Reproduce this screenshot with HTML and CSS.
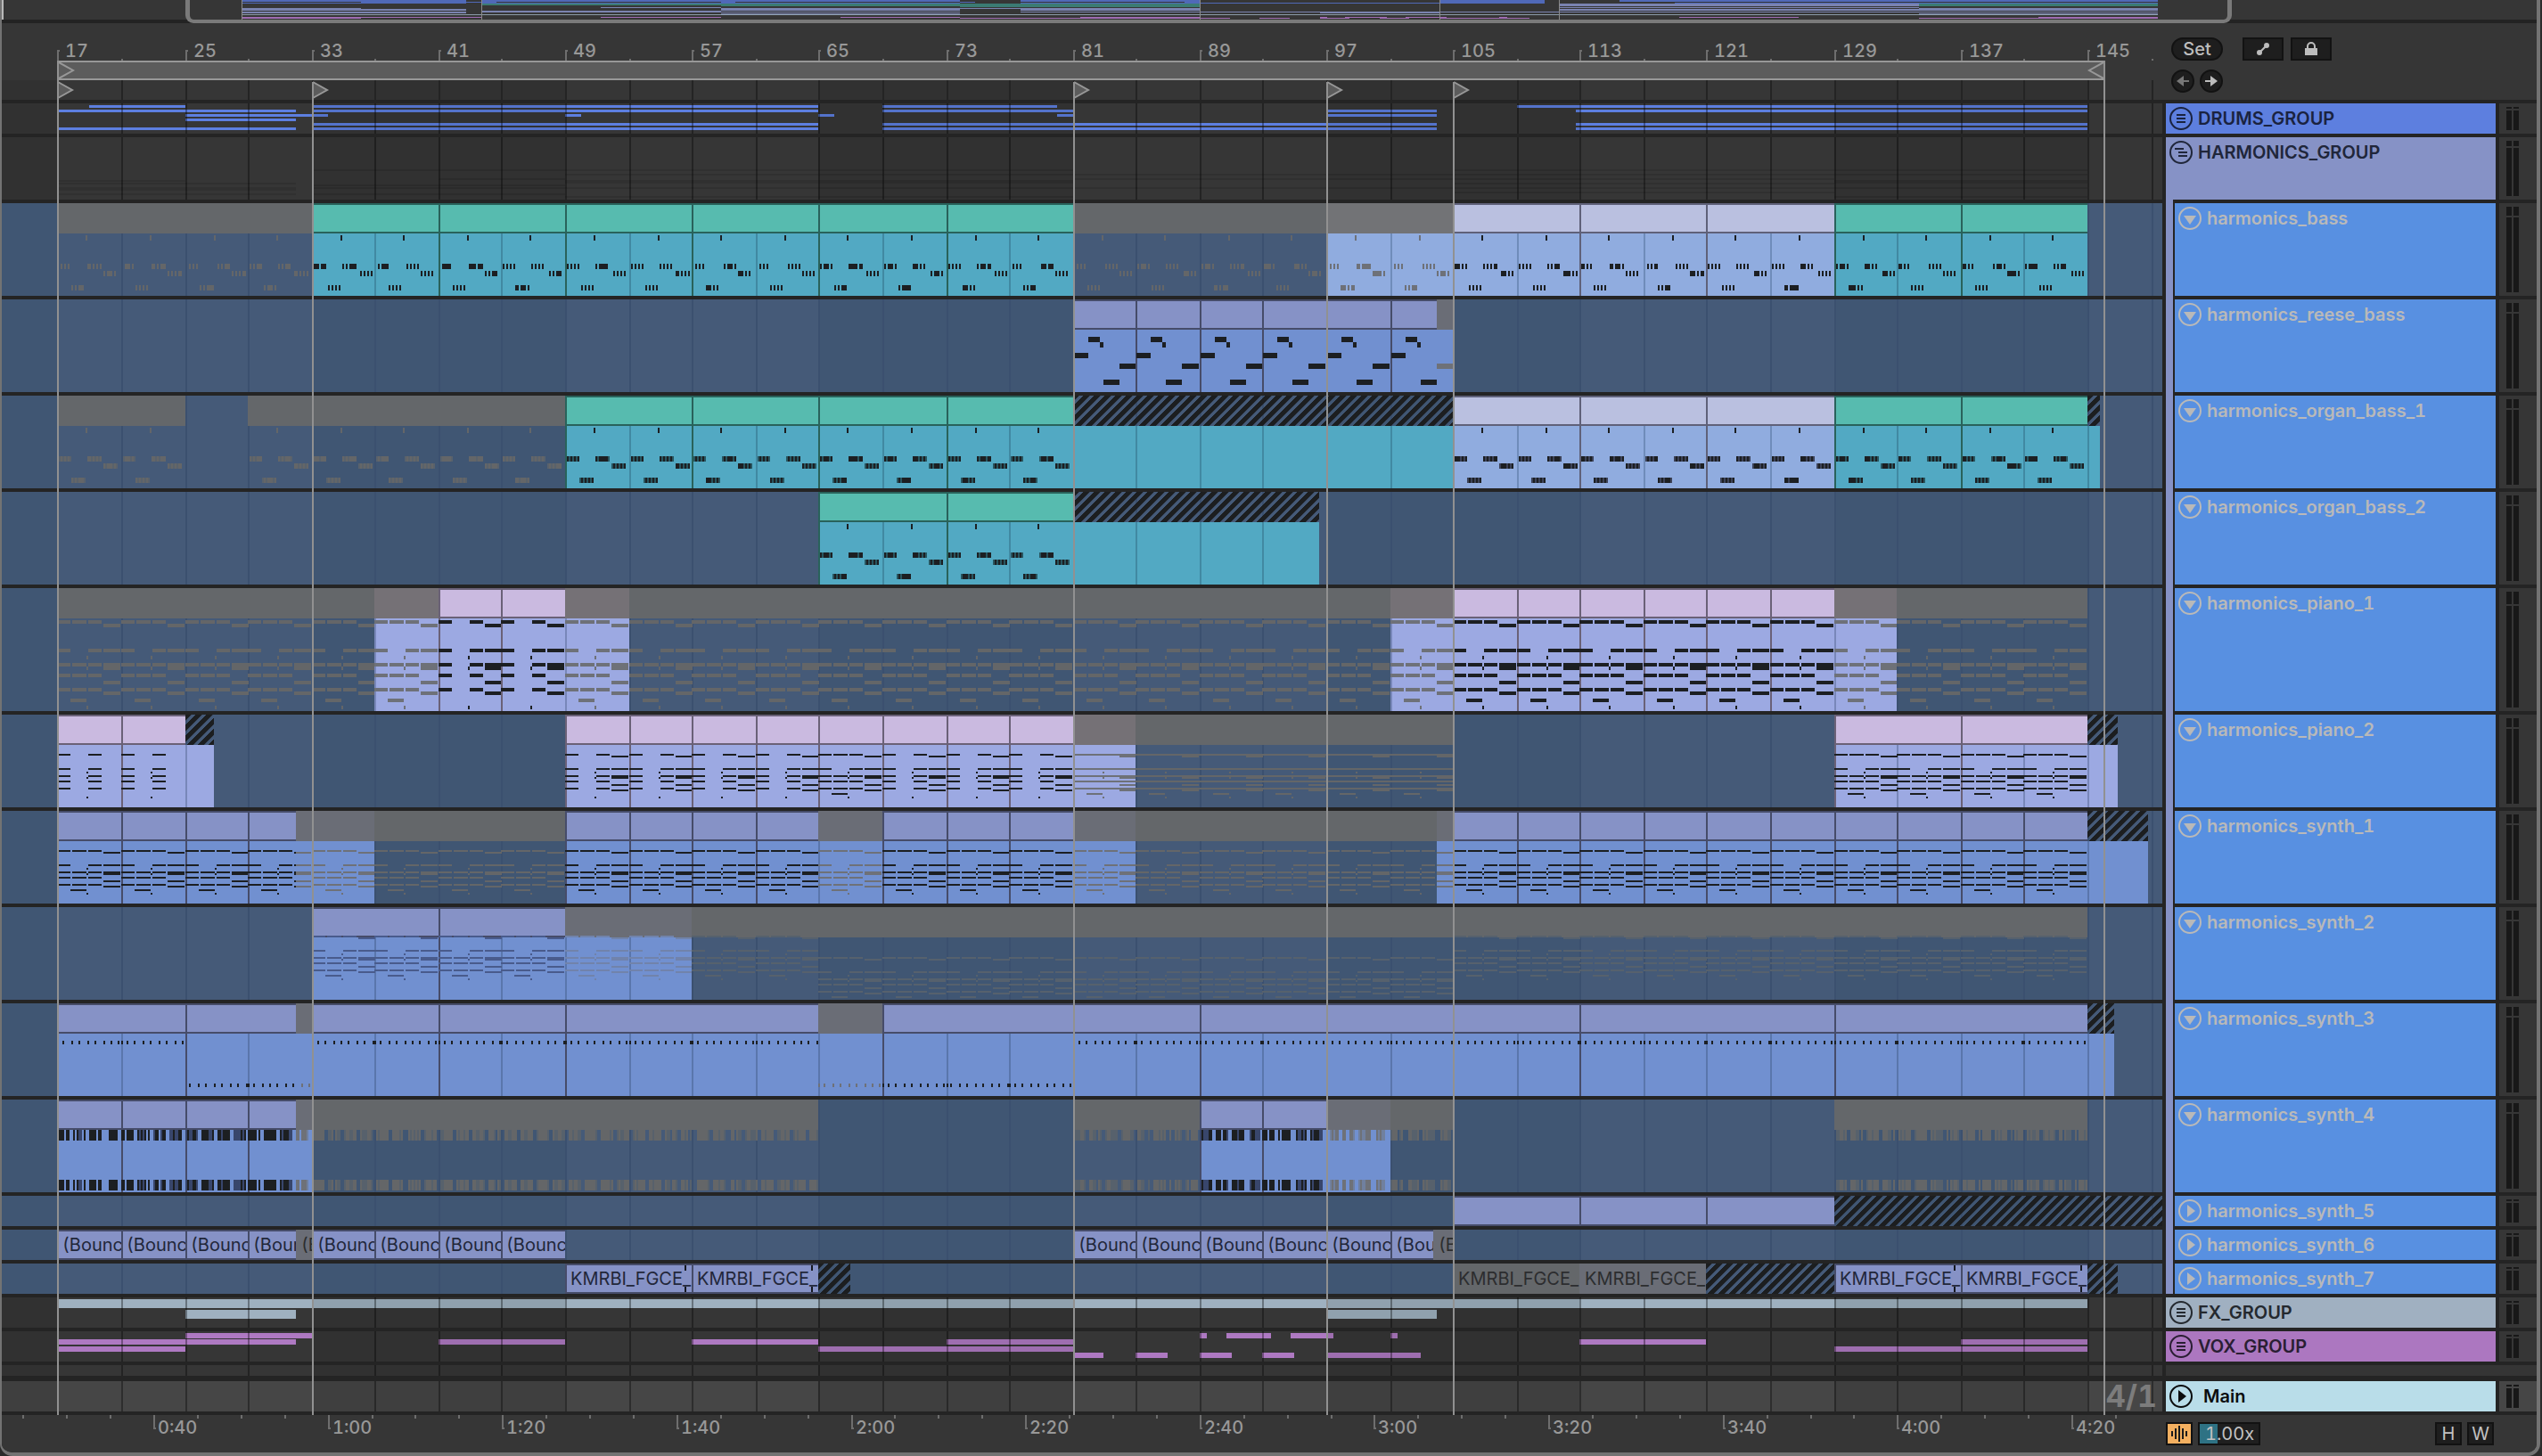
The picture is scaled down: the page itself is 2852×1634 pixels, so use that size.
FILE: index.html
```html
<!DOCTYPE html>
<html lang="en">
<head>
<meta charset="utf-8">
<meta name="viewport" content="width=device-width, initial-scale=1">
<title>Arrangement</title>
<link rel="stylesheet" href="styles.css">
</head>
<body>
<svg class="defs" aria-hidden="true">
  <symbol id="i-group" viewBox="0 0 26 26"><circle cx="13" cy="13" r="12" fill="none" stroke="currentColor" stroke-width="2"/><path d="M8 9h10M8 13h10M8 17h10" stroke="currentColor" stroke-width="2"/></symbol>
  <symbol id="i-group-open" viewBox="0 0 26 26"><circle cx="13" cy="13" r="12" fill="none" stroke="currentColor" stroke-width="2"/><path d="M6 9h10M10 13h10M10 17h10" stroke="currentColor" stroke-width="2"/></symbol>
  <symbol id="i-open" viewBox="0 0 26 26"><circle cx="13" cy="13" r="12" fill="none" stroke="currentColor" stroke-width="2"/><path d="M6 10h14l-7 10z" fill="currentColor"/></symbol>
  <symbol id="i-closed" viewBox="0 0 26 26"><circle cx="13" cy="13" r="12" fill="none" stroke="currentColor" stroke-width="2"/><path d="M10 6v14l9-7z" fill="currentColor"/></symbol>
</svg>
<main class="app">
  <div class="overview"><svg class="overview-map" id="overview"></svg><div class="overview-frame"></div></div>

  <div class="arrangement">
    <header class="top">
      <div class="ruler">
        <div class="bars" id="bars"></div>
        <div class="loop-row"><div class="loop" id="loop"></div></div>
        <svg class="locator-row" id="locatorRow"></svg>
      </div>
      <div class="controls">
        <div class="controls-row">
          <button class="pill">Set</button>
          <button class="box" aria-label="Automation mode"><svg width="16" height="16" viewBox="0 0 16 16"><path d="M4 12L12 4" stroke="currentColor" stroke-width="2"/><circle cx="4" cy="12" r="3" fill="currentColor"/><circle cx="12" cy="4" r="3" fill="currentColor"/></svg></button>
          <button class="box" aria-label="Lock envelopes"><svg width="16" height="16" viewBox="0 0 16 16"><path d="M4 8V5a4 4 0 0 1 8 0v3" fill="none" stroke="currentColor" stroke-width="2"/><path d="M1 7h14v8H1z" fill="currentColor"/></svg></button>
        </div>
        <div class="controls-row arrows">
          <button class="round dim" aria-label="Previous locator"><svg width="16" height="16" viewBox="0 0 16 16"><path d="M1 8l8-6v12z" fill="currentColor"/><path d="M7 8h8" stroke="currentColor" stroke-width="2"/></svg></button>
          <button class="round" aria-label="Next locator"><svg width="16" height="16" viewBox="0 0 16 16"><path d="M15 8L7 2v12z" fill="currentColor"/><path d="M1 8h8" stroke="currentColor" stroke-width="2"/></svg></button>
        </div>
      </div>
    </header>

    <div class="tracks">
      <section class="track h34 drums"><div class="lane" data-lane="drums"></div><div class="head"><button class="fold" aria-label="Unfold"><svg><use href="#i-group"/></svg></button><span class="name">DRUMS_GROUP</span></div><div class="meter"><i></i><i></i></div></section>
      <section class="track h70 harmonics"><div class="lane" data-lane="harmonics"></div><div class="head"><button class="fold" aria-label="Fold"><svg><use href="#i-group-open"/></svg></button><span class="name">HARMONICS_GROUP</span></div><div class="meter"><i></i><i></i></div></section>
      <section class="track h104 child"><div class="lane" data-lane="bass"></div><div class="head"><button class="fold" aria-label="Fold"><svg><use href="#i-open"/></svg></button><span class="name">harmonics_bass</span></div><div class="meter"><i></i><i></i></div></section>
      <section class="track h104 child"><div class="lane" data-lane="reese"></div><div class="head"><button class="fold" aria-label="Fold"><svg><use href="#i-open"/></svg></button><span class="name">harmonics_reese_bass</span></div><div class="meter"><i></i><i></i></div></section>
      <section class="track h104 child"><div class="lane" data-lane="organ1"></div><div class="head"><button class="fold" aria-label="Fold"><svg><use href="#i-open"/></svg></button><span class="name">harmonics_organ_bass_1</span></div><div class="meter"><i></i><i></i></div></section>
      <section class="track h104 child"><div class="lane" data-lane="organ2"></div><div class="head"><button class="fold" aria-label="Fold"><svg><use href="#i-open"/></svg></button><span class="name">harmonics_organ_bass_2</span></div><div class="meter"><i></i><i></i></div></section>
      <section class="track h138 child"><div class="lane" data-lane="piano1"></div><div class="head"><button class="fold" aria-label="Fold"><svg><use href="#i-open"/></svg></button><span class="name">harmonics_piano_1</span></div><div class="meter"><i></i><i></i></div></section>
      <section class="track h104 child"><div class="lane" data-lane="piano2"></div><div class="head"><button class="fold" aria-label="Fold"><svg><use href="#i-open"/></svg></button><span class="name">harmonics_piano_2</span></div><div class="meter"><i></i><i></i></div></section>
      <section class="track h104 child"><div class="lane" data-lane="synth1"></div><div class="head"><button class="fold" aria-label="Fold"><svg><use href="#i-open"/></svg></button><span class="name">harmonics_synth_1</span></div><div class="meter"><i></i><i></i></div></section>
      <section class="track h104 child"><div class="lane" data-lane="synth2"></div><div class="head"><button class="fold" aria-label="Fold"><svg><use href="#i-open"/></svg></button><span class="name">harmonics_synth_2</span></div><div class="meter"><i></i><i></i></div></section>
      <section class="track h104 child"><div class="lane" data-lane="synth3"></div><div class="head"><button class="fold" aria-label="Fold"><svg><use href="#i-open"/></svg></button><span class="name">harmonics_synth_3</span></div><div class="meter"><i></i><i></i></div></section>
      <section class="track h104 child"><div class="lane" data-lane="synth4"></div><div class="head"><button class="fold" aria-label="Fold"><svg><use href="#i-open"/></svg></button><span class="name">harmonics_synth_4</span></div><div class="meter"><i></i><i></i></div></section>
      <section class="track h34 child"><div class="lane" data-lane="synth5"></div><div class="head"><button class="fold" aria-label="Unfold"><svg><use href="#i-closed"/></svg></button><span class="name">harmonics_synth_5</span></div><div class="meter"><i></i><i></i></div></section>
      <section class="track h34 child"><div class="lane" data-lane="synth6"></div><div class="head"><button class="fold" aria-label="Unfold"><svg><use href="#i-closed"/></svg></button><span class="name">harmonics_synth_6</span></div><div class="meter"><i></i><i></i></div></section>
      <section class="track h34 child"><div class="lane" data-lane="synth7"></div><div class="head"><button class="fold" aria-label="Unfold"><svg><use href="#i-closed"/></svg></button><span class="name">harmonics_synth_7</span></div><div class="meter"><i></i><i></i></div></section>
      <section class="track h34 fx"><div class="lane" data-lane="fx"></div><div class="head"><button class="fold" aria-label="Unfold"><svg><use href="#i-group"/></svg></button><span class="name">FX_GROUP</span></div><div class="meter"><i></i><i></i></div></section>
      <section class="track h34 vox"><div class="lane" data-lane="vox"></div><div class="head"><button class="fold" aria-label="Unfold"><svg><use href="#i-group"/></svg></button><span class="name">VOX_GROUP</span></div><div class="meter"><i></i><i></i></div></section>
      <section class="track spacer"><div class="lane" data-lane="spacer"></div><div class="filler"></div></section>
      <section class="track h34 master"><div class="lane" data-lane="main"><span class="fraction">4/1</span></div><div class="head"><button class="fold" aria-label="Unfold"><svg><use href="#i-closed"/></svg></button><span class="name">Main</span></div><div class="meter"><i></i><i></i></div></section>
    </div>
    <div class="locator-lines" id="lines"></div>
  </div>

  <footer class="bottom">
    <div class="times" id="times"></div>
    <div class="bottom-controls">
      <button class="key scrub" aria-label="Scrub"><svg width="26" height="22" viewBox="0 0 26 22"><path d="M5 8v6M9 5v12M13 2v18M17 5v12M21 8v6" stroke="#1b1b1b" stroke-width="2"/></svg></button>
      <label class="speed"><input type="text" value="1.00x" aria-label="Playback speed"></label>
      <button class="key hbtn">H</button>
      <button class="key">W</button>
    </div>
  </footer>
</main>
<script src="script.js"></script>
</body>
</html>
```
FILE: styles.css
```css
* { box-sizing: border-box; }
body {
  margin: 0;
  background: #2b2b2b;
  font-family: Inter, "Liberation Sans", sans-serif;
  font-size: 20px;
  font-variant-numeric: tabular-nums;
  line-height: 24px;
  color: #989898;
}
button { font: inherit; color: inherit; padding: 0; border: 0; background: none; display: flex; align-items: center; justify-content: center; }
.defs { position: absolute; width: 0; height: 0; }

.app {
  margin-right: 2px;
  border: solid #737373;
  border-width: 0 4px 4px 2px;
  border-radius: 0 0 14px 14px;
  background: #242424;
  overflow: hidden;
}

/* overview */
.overview { position: relative; height: 26px; background: #363636; border-bottom: 4px solid #232323; }
.overview::before { content: ""; position: absolute; left: 0; top: 0; width: 2px; height: 22px; background: #b8b8b8; }
.overview-map { display: block; width: 100%; height: 22px; }
.overview-frame { position: absolute; left: 206px; right: 342px; top: -12px; height: 38px; border: solid #7a7a7a; border-width: 0 5px 4px; border-radius: 0 0 9px 9px; }

/* ruler and top controls */
.arrangement { position: relative; }
.top, .track { display: grid; grid-template-columns: minmax(0, 1fr) 370px 42px; column-gap: 4px; }
.top { background: #363636; }
.controls { grid-column: 2 / 4; }
.ruler { overflow: hidden; }
.bars { position: relative; height: 42px; }
.tick { position: absolute; bottom: 0; width: 2px; height: 2px; background: #6e6e6e; }
.tick.major { height: 12px; width: 3px; background: none; border: solid #6e6e6e; border-width: 2px 0 0 2px; }
.bar-no { position: absolute; top: 19px; margin-left: 9px; font-weight: 500; }
.loop-row { position: relative; height: 22px; }
.loop { position: absolute; top: 0; height: 22px; background: #5c5c5c; border: 2px solid #989898; }
.locator-row { display: block; width: 100%; height: 22px; }

.controls { padding: 16px 0 0 6px; color: #bdbdbd; }
.controls-row { display: flex; gap: 8px; margin-bottom: 10px; }
.pill, .box, .round { height: 26px; background: #1e1e1e; border: 2px solid #121212; }
.pill { width: 58px; border-radius: 13px; margin-right: 14px; font-weight: 500; }
.box { width: 46px; }
.arrows { gap: 6px; margin-bottom: 0; }
.round { width: 26px; border-radius: 13px; flex: none; }
.dim { color: #777; }

/* tracks */
.tracks { display: flex; flex-direction: column; gap: 4px; padding: 4px 0; background: #242424; }
.h34 { height: 34px; --cap: 2px; }
.h70 { height: 70px; --cap: 6px; }
.h104 { height: 104px; --cap: 10px; }
.h138 { height: 138px; --cap: 14px; }
.spacer { height: 12px; margin-bottom: 2px; }
.filler { grid-column: 2 / 4; background: #353535; }
.lane { position: relative; overflow: hidden; }
.lane svg { display: block; width: 100%; height: 100%; }
.head { display: flex; align-items: flex-start; gap: 6px; padding: 4px; position: relative; }
.fold { width: 26px; height: 26px; flex: none; }
.fold svg { width: 26px; height: 26px; }
.name { font-weight: 600; line-height: 26px; }
.drums .head { background: #5d7fdf; color: #1a2340; }
.harmonics .head { background: #8692c6; color: #20263a; }
.child .head { background: #5890e1; color: #b9b9b9; margin-left: 10px; }
.child .head::before { content: ""; position: absolute; left: -10px; top: -4px; bottom: 0; width: 8px; background: #8692c6; }
.fx .head { background: #a0b0c1; color: #24292f; }
.vox .head { background: #ac77c0; color: #2a1e33; }
.master .head { background: #b9dde9; color: #0b0d0e; gap: 12px; }
.meter { display: flex; gap: 2px; padding: 4px 8px; background: #363636; }
.master .meter { background: #464646; }
.meter i { width: 6px; background: linear-gradient(#181818 0 0) top / 100% var(--cap) no-repeat, linear-gradient(#181818 0 0) bottom / 100% calc(100% - var(--cap) - 2px) no-repeat; }

.clip-name { position: absolute; top: 2px; height: 30px; padding-left: 6px; line-height: 30px; white-space: nowrap; overflow: hidden; color: #22273a; }
.clip-name.muted { color: #2c2d2f; }
.hatch { position: absolute; top: 0; height: 34px; background: linear-gradient(135deg, #1c1e20 27%, transparent 30% 48%, #1c1e20 50% 77%, transparent 80% 98%, #1c1e20 100%) 0 0 / 12px 12px; }
.fraction { position: absolute; right: 6px; top: 1px; font-size: 34px; line-height: 32px; font-weight: 700; color: #7c7c7c; }

.locator-lines { position: absolute; left: 0; right: 420px; top: 42px; bottom: 0; overflow: hidden; pointer-events: none; }
.locator-lines i { position: absolute; top: 24px; bottom: 0; width: 2px; background: #919191; }
.locator-lines i.edge { top: 0; }

/* bottom */
.bottom { display: grid; grid-template-columns: minmax(0, 1fr) 416px; column-gap: 4px; height: 42px; background: #363636; }
.times { position: relative; overflow: hidden; }
.times .tick { top: 0; height: 4px; }
.times .tick.major { height: 16px; border-width: 0 0 2px 2px; }
.time { position: absolute; top: 2px; margin-left: 5px; font-weight: 500; }
.bottom-controls { display: flex; align-items: flex-start; gap: 6px; padding: 8px 48px 0 0; color: #c2c2c2; }
.key { width: 30px; height: 26px; background: #1e1e1e; border: 2px solid #121212; }
.scrub { background: #f4b060; }
.speed { width: 70px; height: 26px; border: 2px solid #121212; background: linear-gradient(90deg, #2e7284 20px, #1f1f1f 20px); }
.speed input { display: block; width: 100%; height: 22px; padding: 0 0 0 6px; border: 0; background: none; font: inherit; color: inherit; }
.hbtn { margin-left: auto; }
```
FILE: script.js
```js
// Horizontal position of a bar number inside a lane, snapped to the 2px grid.
const X = b => 2 * Math.round(32.4 + (b - 17) * 8.895) - 2;
const END = 4000;

const PAL = {
  teal: { head: '#57bbaf', edge: '#29625b', body: '#52a9c3', line: '#4189a2', dead: '#64676a' },
  lav:  { head: '#bac0e0', edge: '#5f6179', body: '#90acdf', line: '#6f8cba', dead: '#727376' },
  peri: { head: '#8692c6', edge: '#464c69', body: '#7190d0', line: '#5a76ac', dead: '#6a6d76' },
  pink: { head: '#cabae0', edge: '#6a6177', body: '#9ca9e2', line: '#7887b9', dead: '#757176' }
};

const every = (from, to, step, kind, col) => {
  const out = [];
  for (let b = from; b < to; b += step) out.push([b, Math.min(b + step, to), kind, col]);
  return out;
};

// Clip kinds: on = playing, off = muted, ghost = muted over a coloured body, hatch = frozen tail.
const LANES = {
  bass: [[17, 33, 'off'], ...every(33, 81, 8, 'on', 'teal'), [81, 97, 'off'], [97, 105, 'ghost', 'lav'],
    ...every(105, 129, 8, 'on', 'lav'), ...every(129, 145, 8, 'on', 'teal')],
  reese: [...every(81, 104, 4, 'on', 'peri'), [104, 105, 'ghost', 'peri']],
  organ1: [[17, 25, 'off'], [29, 49, 'off'], ...every(49, 81, 8, 'on', 'teal'), [81, 105, 'hatch', 'teal'],
    ...every(105, 129, 8, 'on', 'lav'), ...every(129, 145, 8, 'on', 'teal'), [145, 145.75, 'hatch', 'teal']],
  organ2: [...every(65, 81, 8, 'on', 'teal'), [81, 96.5, 'hatch', 'teal']],
  piano1: [[17, 37, 'off'], [37, 41, 'ghost', 'pink'], ...every(41, 49, 4, 'on', 'pink'), [49, 53, 'ghost', 'pink'],
    [53, 101, 'off'], [101, 105, 'ghost', 'pink'], ...every(105, 129, 4, 'on', 'pink'), [129, 133, 'ghost', 'pink'], [133, 145, 'off']],
  piano2: [...every(17, 25, 4, 'on', 'pink'), [25, 26.8, 'hatch', 'pink'], ...every(49, 81, 4, 'on', 'pink'),
    [81, 85, 'ghost', 'pink'], [85, 105, 'off'], ...every(129, 145, 8, 'on', 'pink'), [145, 146.9, 'hatch', 'pink']],
  synth1: [...every(17, 32, 4, 'on', 'peri'), [32, 37, 'ghost', 'peri'], [37, 49, 'off'], ...every(49, 65, 4, 'on', 'peri'),
    [65, 69, 'ghost', 'peri'], ...every(69, 81, 4, 'on', 'peri'), [81, 85, 'ghost', 'peri'], [85, 104, 'off'],
    [104, 105, 'ghost', 'peri'], ...every(105, 145, 4, 'on', 'peri'), [145, 148.8, 'hatch', 'peri']],
  synth2: [...every(33, 49, 8, 'on', 'peri'), [49, 57, 'ghost', 'peri'], [57, 145, 'off']],
  synth3: [[17, 25, 'on', 'peri'], [25, 32, 'on', 'peri'], [32, 33, 'ghost', 'peri'], [33, 41, 'on', 'peri'], [41, 49, 'on', 'peri'],
    [49, 65, 'on', 'peri'], [65, 69, 'ghost', 'peri'], [69, 81, 'on', 'peri'], [81, 89, 'on', 'peri'], [89, 97, 'on', 'peri'],
    [97, 113, 'on', 'peri'], [113, 129, 'on', 'peri'], [129, 145, 'on', 'peri'], [145, 146.65, 'hatch', 'peri']],
  synth4: [...every(17, 32, 4, 'on', 'peri'), [32, 33, 'ghost', 'peri'], [33, 65, 'off'], [81, 89, 'off'],
    ...every(89, 97, 4, 'on', 'peri'), [97, 101, 'ghost', 'peri'], [101, 105, 'off'], [129, 145, 'off']],
  synth5: [...every(105, 129, 8, 'on', 'peri'), [129, 160, 'hatch']],
  synth6: [...every(17, 32, 4, 'on', 'peri'), [32, 33, 'ghost', 'peri'], ...every(33, 49, 4, 'on', 'peri'),
    ...every(81, 103.8, 4, 'on', 'peri'), [103.8, 105, 'ghost', 'peri']],
  synth7: [...every(49, 65, 8, 'on', 'peri'), [65, 67, 'hatch'], [105, 113, 'off'], [113, 121, 'ghost', 'peri'],
    [121, 129, 'hatch'], ...every(129, 145, 8, 'on', 'peri'), [145, 146.9, 'hatch']]
};

// Clip titles, shortened to the letters that have room.
const NAMES = {
  synth6: w => '(Bounced)'.slice(0, w < 24 ? 2 : w < 52 ? 4 : w < 60 ? 5 : 6),
  synth7: () => 'KMRBI_FGCE_'
};

// Group overviews: [y, height, from, to]
const GROUPS = {
  drums: { col: '#5d7fe0', rows: [
    [2, 3, 19, 25], [7, 3, 17, 32], [12, 3, 25, 34], [17, 3, 25, 32], [27, 3, 17, 32],
    [2, 3, 33, 65], [7, 3, 33, 65], [22, 3, 33, 65], [27, 3, 33, 65], [12, 3, 49, 50],
    [12, 3, 65, 66], [2, 3, 69, 80], [12, 3, 80, 81], [7, 3, 69, 81], [22, 3, 69, 81], [27, 3, 69, 81],
    [22, 3, 81, 104], [27, 3, 81, 104], [7, 3, 97, 104], [12, 3, 97, 104],
    [2, 3, 109, 145], [7, 3, 112.7, 145], [22, 3, 112.7, 145], [27, 3, 112.7, 145]] },
  harmonics: { col: 'rgba(0,0,0,.1)', rows: [
    [48, 2, 17, 25], [51, 2, 17, 32], [56, 4, 17, 32], [63, 2, 17, 32],
    [36, 2, 33, 49], [53, 2, 33, 49], [56, 2, 33, 49], [63, 2, 33, 49], [46, 2, 41, 49],
    [36, 2, 49, 81], [41, 2, 49, 81], [48, 4, 49, 81], [56, 2, 49, 81], [66, 2, 49, 81],
    [41, 2, 81, 105], [46, 2, 81, 105], [56, 2, 81, 105],
    [36, 2, 105, 145], [41, 2, 105, 145], [46, 2, 105, 129], [51, 2, 105, 129], [56, 2, 105, 145], [61, 2, 105, 129], [48, 4, 129, 145], [66, 2, 129, 145]] },
  fx: { col: '#9fb1c0', rows: [[2, 10, 17, 145], [14, 10, 25, 32], [14, 10, 97, 104]] },
  vox: { col: '#ae79c2', rows: [
    [2, 6, 25, 33], [2, 6, 89, 89.5], [2, 6, 90.7, 93.5], [2, 6, 94.75, 97.5], [2, 6, 101, 101.5],
    [9, 6, 17, 32], [9, 6, 41, 49], [9, 6, 57, 65], [9, 6, 73, 81], [9, 6, 113, 121], [9, 6, 137, 145],
    [17, 6, 17, 25], [17, 6, 65, 81], [17, 6, 129, 145],
    [24, 6, 81, 83], [24, 6, 85, 87], [24, 6, 89, 91], [24, 6, 93, 95], [24, 6, 97, 103]] },
  spacer: { col: '', rows: [] },
  main: { col: '', rows: [] }
};

const rect = (x, y, w, h, fill) => w > 0 && h > 0 ? `<rect x="${x}" y="${y}" width="${w}" height="${h}" fill="${fill}"/>` : '';
const hash = n => { let v = Math.imul(n ^ 61, 0x27d4eb2d); v ^= v >>> 15; v = Math.imul(v, 0x85ebca6b); return (v ^ v >>> 13) >>> 0; };

// Alternating shade every 16 bars.
function shade(light, dark, h) {
  let s = rect(0, 0, END, h, light);
  s += rect(0, 0, X(17), h, dark);
  for (let b = 33; b < 145; b += 32) s += rect(X(b), 0, X(b + 16) - X(b), h, dark);
  return s;
}
function grid(h, fill, from = 17, to = 149) {
  let s = '';
  for (let b = Math.ceil((from - 17) / 4) * 4 + 17; b <= to; b += 4) s += rect(X(b), 0, 2, h, fill);
  return s;
}

// Chord phrase repeated every four bars. Row -> segments in px from the phrase start.
const A = [0, 15], B = [17, 33], C = [35, 50], D = [52, 71], T = [33, 35], L = [15, 33];
const CHORDS = [[0, A], [0, B], [0, C], [1, D], [8, A], [8, C], [8, D], [10, T], [12, A], [12, B], [12, C], [12, D],
  [13, T], [13, D], [15, A], [15, B], [15, C], [17, D], [19, A], [19, B], [19, C], [20, D], [22, L], [24, T]];

function chords(from, to, base, unit, col, skip, start = 17) {
  let s = '';
  for (let p = start; p < to; p += 4) {
    if (p + 4 <= from) continue;
    const x0 = X(p), lo = X(from), hi = X(to);
    for (const [row, seg] of CHORDS) {
      if (skip.includes(seg)) continue;
      const a = Math.max(x0 + seg[0], lo), z = Math.min(x0 + seg[1], hi);
      s += rect(a, base + row * unit, z - a, unit, col);
    }
  }
  return s;
}
function stripes(a, z, y, h, col, mid, salt) {
  let s = '';
  for (let x = a; x < z; x += 2) {
    const r = hash(x * 7 + salt) % 5;
    const k = (x / 2) & 1;
    if (k || r === 0) s += rect(x, y, 2, h, col);
    else if (mid) s += rect(x, y, 2, h, mid);
  }
  return s;
}
function bassline(from, to, col, mid) {
  let s = '';
  for (let p = from; p < to; p += 4) {
    const x = X(p);
    s += rect(x + 32, 36, 2, 6, col);
    s += stripes(x + 2, x + 16, 68, 6, col, mid, 1) + stripes(x + 34, x + 50, 68, 6, col, mid, 1);
    s += stripes(x + 52, x + 68, 76, 6, col, mid, 1) + stripes(x + 16, x + 32, 92, 6, col, mid, 1);
  }
  return s;
}
function notes(id, [from, to, kind, pal]) {
  const ink = kind === 'on' ? '#1c1f22' : kind === 'ghost' ? '#6e7178' : '#646668';
  if (kind === 'hatch') return '';
  const w0 = X(from), w1 = X(to);
  let s = '';
  switch (id) {
    case 'bass': return bassline(from, to, ink, '');
    case 'organ1': case 'organ2':
      return bassline(from, to, ink, kind === 'on' ? (pal === 'lav' ? '#3c4258' : '#285660') : '#59626c');
    case 'reese':
      for (let p = from === 104 ? 101 : from; p < to; p += 4)
        for (const [y, a, z] of [[42, 17, 30], [48, 30, 34], [60, 1, 17], [72, 52, 71], [90, 34, 52]]) {
          const l = Math.max(X(p) + a, w0), r = Math.min(X(p) + z, w1);
          s += rect(l, y, r - l, 6, ink);
        }
      return s;
    case 'piano1': return chords(from, to, 36, 4, ink, from >= 41 && to <= 49 ? [B, L] : []);
    case 'piano2':
      if (to <= 25) return chords(from, to, 44, 2, ink, [B, L, D]);
      return chords(from, to, 44, 2, ink, from >= 49 && to <= 81 && from !== 65 ? [B, L] : []) +
        (kind === 'on' ? '' : [44, 60, 68, 74, 82].map(y => rect(w0, y, w1 - w0, 2, ink)).join(''));
    case 'synth1': return chords(from, to, 44, 2, ink, []);
    case 'synth2': {
      const c = kind === 'on' ? '#495b8c' : kind === 'ghost' ? '#7183ab' : '#56616d';
      if (from < 57) return chords(from, to, 32, 2, c, []);
      return chords(57, 65, 32, 2, c, [], 57) + chords(65, 105, 56, 2, c, [], 65) + chords(105, 145, 32, 2, c, [], 105);
    }
    case 'synth3': {
      const y = from === 25 || from === 32 || from === 65 || from === 69 ? 90 : 42;
      for (let b = from; b < to; b += .5) {
        const x = X(b + .33);
        if (x < w1) s += rect(x, y, 2, 4, ink);
        if ((b - 17) % 4 === 0 && b !== 25) s += rect(X(b), y, 2, 4, ink);
      }
      return s;
    }
    case 'synth4': {
      const mid = kind === 'on' ? '#38466c' : kind === 'ghost' ? '#70809f' : '#57616c';
      for (let x = w0; x < w1; x += 2) {
        const ph = (x - w0 + 4) % 18, r = hash(x) % 16;
        if (ph < 3 || r === 15) continue;
        const c = r > 4 ? ink : mid;
        s += rect(x, 34, 2, 12, c) + rect(x, 90, 2, 12, c);
      }
      return s;
    }
  }
  return '';
}

for (const lane of document.querySelectorAll('.lane')) {
  const id = lane.dataset.lane, h = lane.clientHeight, group = GROUPS[id];
  let s = '', extra = '';
  if (group) {
    s += id === 'main' ? shade('#464646', '#3f3f3f', h) : shade('#363636', '#363636', h);
    for (const [y, rh, a, z] of group.rows) s += rect(X(a), y, X(z) - X(a), rh, group.col);
    if (id !== 'main') s += shade('none', 'rgba(0,0,0,.09)', h);
    s += grid(h, 'rgba(0,0,0,.35)');
  } else {
    s += shade('#455a78', '#405673', h) + grid(h, '#3b506f');
    const clips = LANES[id];
    for (const [a, z, kind, pal] of clips) {
      const p = PAL[pal], w = X(z) - X(a);
      if (p && kind !== 'off') {
        s += rect(X(a), 34, w, h - 34, p.body);
        for (let b = a - (a - 17) % 4; b < z; b += 4) if (b >= a) s += rect(X(b), 34, 2, h - 34, p.line);
      }
    }
    for (const clip of clips) {
      const [a, z, kind, pal] = clip, p = PAL[pal], x = X(a), w = X(z) - x;
      if (kind === 'on') s += rect(x, 0, 2, h, p.edge) + rect(x, 0, w, 34, p.edge) + rect(x + 2, 2, w - 2, 30, p.head);
      else if (kind !== 'hatch') s += rect(x, 0, w, 34, kind === 'ghost' ? p.dead : '#64676a');
      else extra += `<div class="hatch" style="left:${x}px;width:${w}px"></div>`;
      s += notes(id, clip);
      if (NAMES[id] && kind !== 'hatch') {
        extra += `<span class="clip-name${kind === 'on' ? '' : ' muted'}" style="left:${x}px;width:${w}px">${NAMES[id](w)}</span>`;
        if (id === 'synth7' && kind === 'on') s += rect(x + w - 8, 2, 2, 6, '#161820') + rect(x + w - 8, 26, 2, 6, '#161820');
      }
    }
  }
  lane.insertAdjacentHTML('afterbegin', `<svg>${s}</svg>${extra}`);
}

// Bar ruler
let ruler = '';
for (let b = 17; b <= 149; b += 4) {
  const major = (b - 17) % 8 === 0;
  ruler += `<i class="tick${major ? ' major' : ''}" style="left:${X(b)}px"></i>`;
  if (major) ruler += `<span class="bar-no" style="left:${X(b)}px">${b}</span>`;
}
document.getElementById('bars').innerHTML = ruler;

// Loop brace
const LOOP_END = 2360;
const loop = document.getElementById('loop');
loop.style.left = X(17) + 'px';
loop.style.width = LOOP_END - X(17) + 'px';
loop.innerHTML = `<svg width="100%" height="18" style="display:block"><path d="M0 0L16 9L0 18" fill="#5c5c5c" stroke="#989898" stroke-width="2"/><svg x="100%" overflow="visible"><path d="M0 0L-16 9L0 18" fill="#5c5c5c" stroke="#989898" stroke-width="2"/></svg></svg>`;

// Locators
const LOCATORS = [17, 33, 81, 97, 105];
let loc = shade('#363636', '#313131', 22) + grid(22, '#242424');
for (const b of LOCATORS) loc += `<path d="M${X(b) + 1} 2l16 9l-16 9" fill="#5c5c5c" stroke="#989898" stroke-width="2"/>`;
document.getElementById('locatorRow').innerHTML = loc;
document.getElementById('lines').innerHTML =
  LOCATORS.map(b => `<i class="${b === 17 ? 'edge' : ''}" style="left:${X(b)}px"></i>`).join('') +
  `<i class="edge" style="left:${LOOP_END - 2}px"></i>`;

// Time ruler
let times = '';
for (let t = 25; t <= 265; t += 5) {
  const x = Math.round(170 + (t - 40) * 9.782), major = t % 20 === 0;
  times += `<i class="tick${major ? ' major' : ''}" style="left:${x}px"></i>`;
  if (major) times += `<span class="time" style="left:${x}px">${Math.floor(t / 60)}:${String(t % 60).padStart(2, '0')}</span>`;
}
document.getElementById('times').innerHTML = times;

// Overview map: a thumbnail of every lane
const OX = b => Math.round(269 + (b - 17) * 16.8);
const ROWS = { bass: [4, 2], organ1: [6, 1], organ2: [7, 1], piano1: [8, 1], piano2: [9, 1], synth1: [10, 2], synth2: [12, 1], synth3: [13, 1], synth4: [14, 1], synth7: [15, 1] };
let map = '';
for (const [y, , a, z] of GROUPS.drums.rows) map += rect(OX(a), y < 10 ? 0 : y < 20 ? 2 : 3, OX(z) - OX(a), y < 10 ? 2 : 1, '#5069b8');
for (const id in ROWS)
  for (const [a, z, kind, pal] of LANES[id])
    if (kind === 'on') map += rect(OX(a), ROWS[id][0], OX(z) - OX(a), ROWS[id][1], pal === 'teal' ? '#3b7b73' : '#7a83b0');
map += rect(OX(17), 16, OX(145) - OX(17), 1, '#8b9ba8');
for (const [y, , a, z] of GROUPS.vox.rows) map += rect(OX(a), y < 17 ? 19 : 20, OX(z) - OX(a), 1, '#a06db2');
for (const b of LOCATORS) map += rect(OX(b), 0, 1, 22, '#8a8a8a');
document.getElementById('overview').innerHTML = map;
```
